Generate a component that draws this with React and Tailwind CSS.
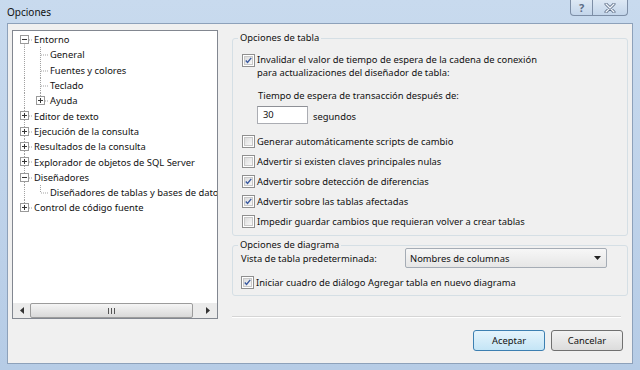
import React from "react";

const treeRows = [
  { lines: ["first"], exp: "minus", label: "Entorno" },
  { lines: ["pipe", "tee"], label: "General" },
  { lines: ["pipe", "tee"], label: "Fuentes y colores" },
  { lines: ["pipe", "tee"], label: "Teclado" },
  { lines: ["pipe", "ell"], exp: "plus", label: "Ayuda" },
  { lines: ["tee"], exp: "plus", label: "Editor de texto" },
  { lines: ["tee"], exp: "plus", label: "Ejecución de la consulta" },
  { lines: ["tee"], exp: "plus", label: "Resultados de la consulta" },
  { lines: ["tee"], exp: "plus", label: "Explorador de objetos de SQL Server" },
  { lines: ["tee"], exp: "minus", label: "Diseñadores" },
  { lines: ["pipe", "ell"], label: "Diseñadores de tablas y bases de datos" },
  { lines: ["ell"], exp: "plus", label: "Control de código fuente" },
];

const H = 15.3;
const MID = 7.5;

function TreeCell({ type, exp, last }) {
  const dash = { stroke: "#a0a0a0", strokeWidth: 1, strokeDasharray: "1 1" };
  return (
    <svg width="16" height={H} viewBox={`0 0 16 ${H}`} className="shrink-0">
      {(type === "pipe" || type === "tee") && <line x1="8.5" y1="0" x2="8.5" y2={H} {...dash} />}
      {type === "ell" && <line x1="8.5" y1="0" x2="8.5" y2={MID} {...dash} />}
      {type === "first" && <line x1="8.5" y1={MID} x2="8.5" y2={H} {...dash} />}
      {last && <line x1="9" y1={MID + 0.5} x2="16" y2={MID + 0.5} {...dash} />}
      {exp && (
        <g>
          <rect x="4.5" y="3.5" width="8" height="8" fill="#fff" stroke="#9a9a9a" />
          <line x1="6" y1="7.5" x2="11" y2="7.5" stroke="#333" />
          {exp === "plus" && <line x1="8.5" y1="5" x2="8.5" y2="10" stroke="#333" />}
        </g>
      )}
    </svg>
  );
}

function Check({ checked }) {
  return (
    <div className="w-[13px] h-[13px] shrink-0 border border-[#8f8f8f] bg-white p-[1px]">
      <div className="w-full h-full bg-linear-to-br from-[#dcdcdc] to-[#f8f8f8] border border-[#c8c8c8] flex items-center justify-center">
        {checked && (
          <svg width="9" height="9" viewBox="0 0 9 9">
            <path d="M1 4.5 L3.3 7 L8 1.2" fill="none" stroke="#3a5aa0" strokeWidth="1.8" />
          </svg>
        )}
      </div>
    </div>
  );
}

function CheckRow({ checked, children }) {
  return (
    <div className="h-[20px] flex items-center gap-[2px]">
      <Check checked={checked} />
      <span className="leading-[15px] whitespace-nowrap">{children}</span>
    </div>
  );
}

function TitleButtons() {
  return (
    <div className="flex h-[16px]">
      <div className="w-[23px] h-full border border-[#7d8ea6] border-t-0 rounded-bl-[4px] bg-linear-to-b from-[#dde8f4] to-[#c3d5ea] flex items-center justify-center">
        <span className="text-[11px] leading-none font-bold text-[#5c6d86]">?</span>
      </div>
      <div className="w-[35px] h-full border border-[#7d8ea6] border-t-0 border-l-0 rounded-br-[4px] bg-linear-to-b from-[#dde8f4] to-[#c3d5ea] flex items-center justify-center">
        <svg width="12" height="10" viewBox="0 0 12 10">
          <path d="M2 1 L10 9 M10 1 L2 9" stroke="#5c6d86" strokeWidth="3" strokeLinecap="round" />
          <path d="M2 1 L10 9 M10 1 L2 9" stroke="#f2f6fb" strokeWidth="1.4" strokeLinecap="round" />
        </svg>
      </div>
    </div>
  );
}

function HScroll() {
  return (
    <div className="h-[15px] shrink-0 flex bg-[#ebebeb]">
      <div className="w-[17px] flex items-center justify-center">
        <svg width="4" height="7" viewBox="0 0 4 7">
          <path d="M4 0 L0 3.5 L4 7 Z" fill="#333" />
        </svg>
      </div>
      <div className="w-[163px] rounded-[2px] border border-[#9c9c9c] bg-linear-to-b from-[#f5f5f5] to-[#d9d9d9] flex items-center justify-center">
        <svg width="7" height="6" viewBox="0 0 7 6">
          <path d="M0.5 0 V6 M3.5 0 V6 M6.5 0 V6" stroke="#555" />
        </svg>
      </div>
      <div className="flex-1 flex items-center justify-end pr-[7px]">
        <svg width="4" height="7" viewBox="0 0 4 7">
          <path d="M0 0 L4 3.5 L0 7 Z" fill="#333" />
        </svg>
      </div>
    </div>
  );
}

function Tree() {
  return (
    <div className="w-[206px] h-[289px] shrink-0 border border-[#828790] bg-white flex flex-col">
      <div className="flex-1 overflow-hidden pt-[1px] pl-[3px]">
        {treeRows.map((r, i) => (
          <div key={i} className="flex items-center h-[15.3px] whitespace-nowrap">
            {r.lines.map((t, j) => (
              <TreeCell key={j} type={t} last={j === r.lines.length - 1} exp={j === r.lines.length - 1 ? r.exp : null} />
            ))}
            <span className="ml-[2px] leading-[15px]">{r.label}</span>
          </div>
        ))}
      </div>
      <HScroll />
    </div>
  );
}

export default function App() {
  return (
    <div className="w-[640px] h-[370px] overflow-hidden flex flex-col bg-linear-to-b from-[#c8daee] to-[#b6cce6] font-['Noto_Sans',sans-serif] text-[9.4px] text-[#111]">
      {/* title bar */}
      <div className="h-[23px] shrink-0 flex items-start justify-between pl-[7px] pr-[12px]">
        <span className="mt-[4px] text-[10px] leading-[16px]">Opciones</span>
        <TitleButtons />
      </div>

      {/* client area */}
      <div className="h-[341px] mx-[7px] border border-[#8da1ba] bg-[#f0f0f0] flex pt-[6px] pl-[4px]">
        <Tree />

        <div className="ml-[14px] w-[396px] flex flex-col">
          <fieldset className="border border-[#d5dfe5] rounded-[3px] pl-[9px] pr-[4px] pb-[4px]">
            <legend className="-ml-[4px] px-[2px] leading-[16px]">Opciones de tabla</legend>
            <div className="pt-[7px] flex items-start gap-[2px]">
              <div className="mt-[1px]"><Check checked /></div>
              <div className="leading-[13px]">
                Invalidar el valor de tiempo de espera de la cadena de conexión
                <br />
                para actualizaciones del diseñador de tabla:
              </div>
            </div>
            <div className="mt-[9px] ml-[16px] leading-[15px]">Tiempo de espera de transacción después de:</div>
            <div className="mt-[2px] ml-[15px] flex items-center">
              <div className="w-[51px] h-[18px] border border-[#abadb3] border-t-[#8e9096] bg-white pl-[5px] flex items-center leading-[15px]">30</div>
              <span className="ml-[5px] mt-[4px] leading-[15px]">segundos</span>
            </div>
            <div className="mt-[7px]">
              <CheckRow>Generar automáticamente scripts de cambio</CheckRow>
              <CheckRow>Advertir si existen claves principales nulas</CheckRow>
              <CheckRow checked>Advertir sobre detección de diferencias</CheckRow>
              <CheckRow checked>Advertir sobre las tablas afectadas</CheckRow>
              <CheckRow>Impedir guardar cambios que requieran volver a crear tablas</CheckRow>
            </div>
          </fieldset>

          <fieldset className="mt-[2px] border border-[#d5dfe5] rounded-[3px] pl-[8px] pr-[4px] pb-[3px]">
            <legend className="-ml-[3px] px-[2px] leading-[14px]">Opciones de diagrama</legend>
            <div className="-mt-[4px] h-[20px] flex items-center">
              <span className="w-[164px] leading-[15px]">Vista de tabla predeterminada:</span>
              <div className="w-[202px] h-[20px] rounded-[2px] border border-[#a5acb5] bg-linear-to-b from-[#f7f7f7] to-[#e6e6e6] flex items-center justify-between pl-[4px] pr-[5px]">
                <span className="leading-[15px]">Nombres de columnas</span>
                <svg width="7" height="4" viewBox="0 0 7 4">
                  <path d="M0 0 H7 L3.5 4 Z" fill="#222" />
                </svg>
              </div>
            </div>
            <div className="mt-[4px]">
              <CheckRow checked>Iniciar cuadro de diálogo Agregar tabla en nuevo diagrama</CheckRow>
            </div>
          </fieldset>

          <div className="mt-[20px] w-[389px] h-[2px] border-t border-[#d5d5d5] border-b border-b-white" />

          <div className="mt-[12px] w-[391px] flex justify-end gap-[6px]">
            <button className="w-[72px] h-[21px] rounded-[3px] border border-[#3c7fb1] bg-linear-to-b from-[#e5f4fc] to-[#c4e5f6] leading-[15px]">
              Aceptar
            </button>
            <button className="w-[72px] h-[21px] rounded-[3px] border border-[#707070] bg-linear-to-b from-[#f2f2f2] to-[#dcdcdc] leading-[15px]">
              Cancelar
            </button>
          </div>
        </div>
      </div>
    </div>
  );
}
